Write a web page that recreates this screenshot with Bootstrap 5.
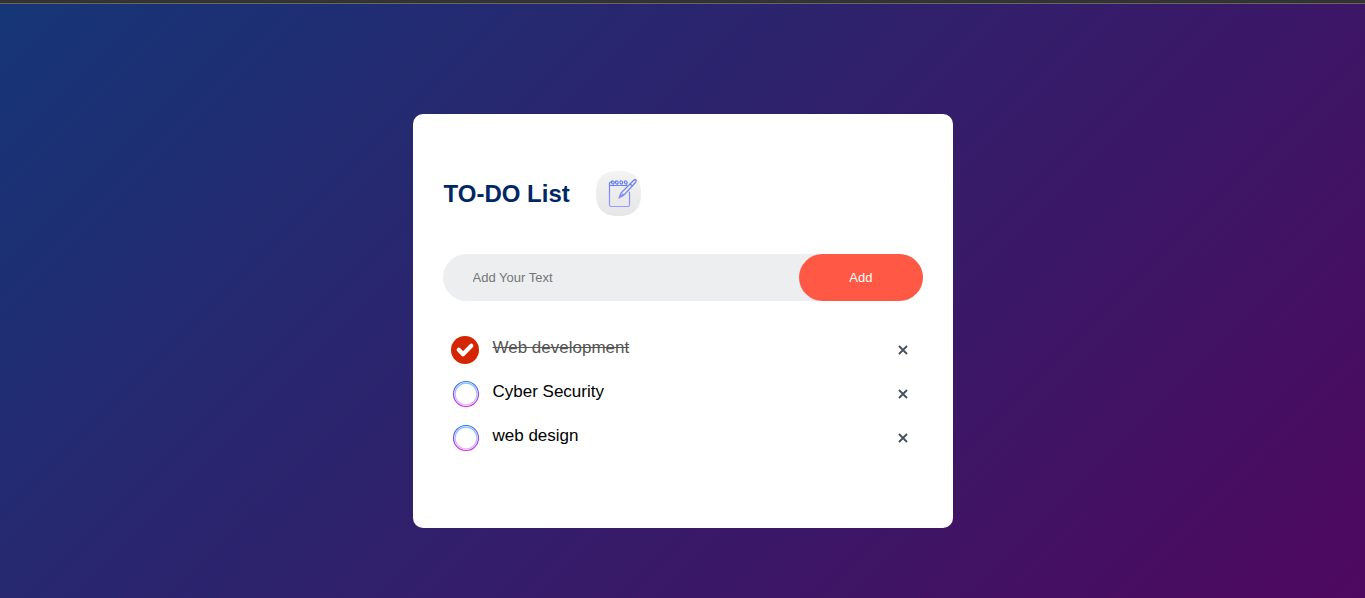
<!DOCTYPE html>
<html lang="en">
<head>
<meta charset="utf-8">
<meta name="viewport" content="width=device-width, initial-scale=1">
<title>TO-DO List</title>
<link href="https://cdn.jsdelivr.net/npm/bootstrap@5.3.0/dist/css/bootstrap.min.css" rel="stylesheet">
<style>
body { font-family: "Liberation Sans", Arial, sans-serif; background: linear-gradient(135deg, #153677, #4e085f); border-top: 3px solid #333; }
.page { border-top: 1px solid #666; padding: 110px 10px 70px; }
.todo { max-width: 540px; padding: 57px 30px 68px; border-radius: 10px; }
.todo-head { gap: 26px; margin-bottom: 38px; }
.todo-head h1 { font-size: 24px; line-height: 28px; color: #002765; padding-left: 1px; }
.todo-form { background: #edeef0; border-radius: 30px; margin-bottom: 27px; }
.todo-form input { font-size: 13px; line-height: 15px; padding: 16px 0 16px 30px; color: #333; outline: 0; min-width: 0; }
.todo-form input::placeholder { color: #757575; opacity: 1; }
.todo-form button { font-size: 13px; line-height: 15px; padding: 16px 50px; background: #ff5945; border-radius: 40px; }
.todo-item { min-height: 44px; padding-left: 8px; gap: 14px; }
.todo-item input { appearance: none; width: 28px; height: 28px; margin: 0; background: url("data:image/svg+xml,%3Csvg xmlns='http://www.w3.org/2000/svg' viewBox='0 0 28 28'%3E%3Cdefs%3E%3ClinearGradient id='a' x2='0' y2='1'%3E%3Cstop stop-color='%232f6fe8'/%3E%3Cstop offset='1' stop-color='%23cf30ec'/%3E%3C/linearGradient%3E%3ClinearGradient id='b' x2='0' y2='1'%3E%3Cstop stop-color='%2378c4ff'/%3E%3Cstop offset='1' stop-color='%23f4b0fa'/%3E%3C/linearGradient%3E%3C/defs%3E%3Cg fill='none'%3E%3Ccircle cx='15' cy='14' r='12.5' stroke='url(%23a)' stroke-width='1.2'/%3E%3Ccircle cx='15' cy='14' r='10.9' stroke='url(%23b)' stroke-width='1.2'/%3E%3C/g%3E%3C/svg%3E") center / 28px; }
.todo-item input:checked { background-image: url("data:image/svg+xml,%3Csvg xmlns='http://www.w3.org/2000/svg' viewBox='0 0 28 28'%3E%3Ccircle cx='14' cy='14' r='14' fill='%23d42600'/%3E%3Cpath d='M7.8 13.8l4.2 4.4 8.3-8.4' fill='none' stroke='%23fff' stroke-width='4.2' stroke-linecap='round' stroke-linejoin='round'/%3E%3C/svg%3E"); }
.todo-item label { font-size: 17px; line-height: 20px; color: #000; padding-bottom: 4px; }
.todo-item input:checked + label { color: #555; text-decoration: line-through; }
.todo-item button { width: 40px; height: 40px; color: #444f5c; }
</style>
</head>
<body class="min-vh-100">
<main class="page">
  <section class="todo bg-white mx-auto">
    <header class="todo-head d-flex align-items-center">
      <h1 class="fw-bold mb-0">TO-DO List</h1>
      <svg width="45" height="45" viewBox="0 0 45 45" fill="none" aria-hidden="true">
        <defs>
          <linearGradient id="tile" x2="0" y2="1"><stop stop-color="#f3f3f3"/><stop offset="1" stop-color="#e6e6e6"/></linearGradient>
          <linearGradient id="ink" gradientUnits="userSpaceOnUse" x1="0" y1="9" x2="0" y2="36"><stop stop-color="#5d7cf0"/><stop offset="1" stop-color="#9d98ff"/></linearGradient>
        </defs>
        <path d="M22.500 0C38 0 45 7 45 22.500S38 45 22.500 45 0 38 0 22.500 7 0 22.500 0Z" fill="url(#tile)"/>
        <g stroke="url(#ink)" stroke-width="1.200" stroke-linecap="round" stroke-linejoin="round">
          <path d="M33.500 21V34q0 1.500-1.500 1.500H15q-1.500 0-1.500-1.500V12.500q0-1.500 1.500-1.500H16M13.500 14.500H31"/>
          <path d="M16.500 13c-2-1.500-1-3.500.5-3s1.500 2 .5 3M20.500 13c-2-1.500-1-3.500.5-3s1.500 2 .5 3M25 13c-2-1.500-1-3.500.5-3s1.500 2 .5 3M29.500 13c-2-1.500-1-3.500.5-3s1.500 2 .5 3"/>
          <path d="M23 27l2-5L37.500 9.500q2-1.500 2.500-.5t-.5 2.500L27.500 24.500 23 27ZM34 13l2.500 2M23 27l4-4"/>
        </g>
      </svg>
    </header>
    <form class="todo-form d-flex align-items-center" onsubmit="return false">
      <input type="text" class="flex-grow-1 border-0 bg-transparent" placeholder="Add Your Text" aria-label="New task">
      <button type="submit" class="border-0 text-white">Add</button>
    </form>
    <ul class="list-unstyled mb-0">
      <li class="todo-item d-flex align-items-center">
        <input type="checkbox" class="flex-shrink-0" id="task1" checked>
        <label for="task1" class="flex-grow-1">Web development</label>
        <button type="button" class="d-flex align-items-center justify-content-center border-0 bg-transparent p-0" aria-label="Delete Web development"><svg width="10" height="10" viewBox="0 0 10 10" stroke="currentColor" stroke-width="1.800" aria-hidden="true"><path d="M1 1l8 8M9 1L1 9"/></svg></button>
      </li>
      <li class="todo-item d-flex align-items-center">
        <input type="checkbox" class="flex-shrink-0" id="task2">
        <label for="task2" class="flex-grow-1">Cyber Security</label>
        <button type="button" class="d-flex align-items-center justify-content-center border-0 bg-transparent p-0" aria-label="Delete Cyber Security"><svg width="10" height="10" viewBox="0 0 10 10" stroke="currentColor" stroke-width="1.800" aria-hidden="true"><path d="M1 1l8 8M9 1L1 9"/></svg></button>
      </li>
      <li class="todo-item d-flex align-items-center">
        <input type="checkbox" class="flex-shrink-0" id="task3">
        <label for="task3" class="flex-grow-1">web design</label>
        <button type="button" class="d-flex align-items-center justify-content-center border-0 bg-transparent p-0" aria-label="Delete web design"><svg width="10" height="10" viewBox="0 0 10 10" stroke="currentColor" stroke-width="1.800" aria-hidden="true"><path d="M1 1l8 8M9 1L1 9"/></svg></button>
      </li>
    </ul>
  </section>
</main>
<script src="https://cdn.jsdelivr.net/npm/bootstrap@5.3.0/dist/js/bootstrap.bundle.min.js"></script>
</body>
</html>
